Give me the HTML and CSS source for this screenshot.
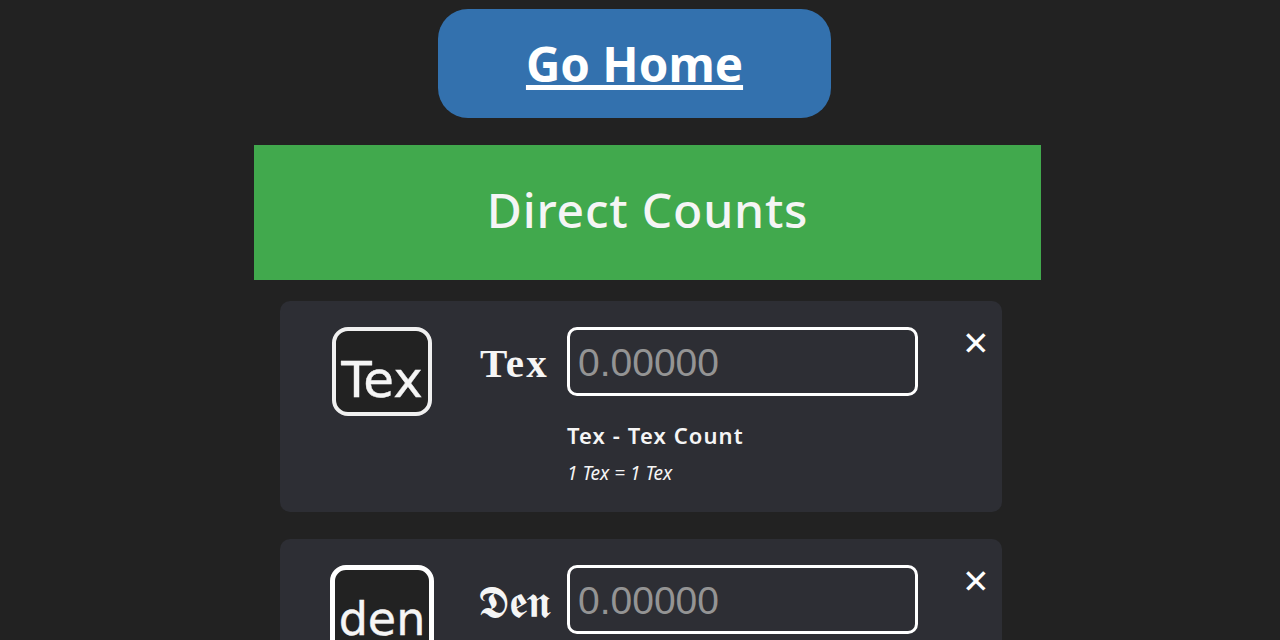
FILE: index.html
```html
<!DOCTYPE html>
<html lang="en">
<head>
    <meta charset="UTF-8">
    <meta name="viewport" content="width=device-width, initial-scale=1.0">
    <title>Direct Counts</title>
    <link rel="stylesheet" href="styles.css">
</head>
<body>
    <div class="home-row">
        <a class="home-btn" href="#">Go Home</a>
    </div>

    <div class="container">
        <h1 class="section-title">Direct Counts</h1>

        <div class="card">
            <div class="icon-col">
                <div class="unit-icon"><span>Tex</span></div>
            </div>
            <div class="symbol symbol-tex">Tex</div>
            <div class="field-col">
                <input type="text" class="count-input" placeholder="0.00000">
                <p class="unit-name">Tex - Tex Count</p>
                <p class="unit-rate">1 Tex = 1 Tex</p>
            </div>
            <div class="close-btn">&#10005;</div>
        </div>

        <div class="card">
            <div class="icon-col">
                <div class="unit-icon unit-icon-big"><span>den</span></div>
            </div>
            <div class="symbol symbol-den">𝕯𝖊𝖓</div>
            <div class="field-col">
                <input type="text" class="count-input" placeholder="0.00000">
            </div>
            <div class="close-btn">&#10005;</div>
        </div>
    </div>
</body>
</html>
```

FILE: styles.css
```css
html, body {
    height: 640px;
    overflow: hidden;
}

body {
    font-family: "Noto Sans", sans-serif;
    background-color: #222222;
    color: #f5f5f5;
    margin: 0;
    padding: 0;
}

.home-row {
    width: 1269px;
    padding-top: 9px;
    display: flex;
    justify-content: center;
}

.home-btn {
    width: 393px;
    height: 109px;
    background-color: #3371ae;
    border-radius: 30px;
    color: white;
    font-family: "Noto Sans", sans-serif;
    font-size: 47.5px;
    font-weight: bold;
    line-height: 110px;
    text-align: center;
    text-decoration-thickness: 5px;
    text-underline-offset: 3px;
}

.container {
    width: 787px;
    margin-top: 27px;
    margin-left: 254px;
}

.section-title {
    height: 135px;
    margin: 0;
    background-color: #41a94d;
    font-size: 48px;
    font-weight: 500;
    letter-spacing: 0.8px;
    line-height: 130px;
    text-align: center;
}

.card {
    width: 722px;
    height: 211px;
    box-sizing: border-box;
    margin: 21px 0 27px 26px;
    padding: 26px 0 0;
    background-color: #2d2e34;
    border-radius: 10px;
    display: flex;
    align-items: flex-start;
}

.card + .card {
    margin-top: 0;
}

.icon-col {
    width: 195px;
    padding-left: 9px;
    box-sizing: border-box;
    display: flex;
    justify-content: center;
}

.unit-icon {
    width: 100px;
    height: 89px;
    box-sizing: border-box;
    border: 4px solid #f0f0f0;
    border-radius: 16px;
    background-color: #222222;
    font-family: "DejaVu Sans", sans-serif;
    font-size: 50px;
    line-height: 98px;
    text-align: center;
    -webkit-text-stroke: 0.4px #f5f5f5;
    overflow: hidden;
}

.unit-icon-big {
    width: 104px;
    height: 110px;
    border: 5px solid white;
    font-size: 46px;
    line-height: 98px;
}

.symbol {
    width: 92px;
    box-sizing: border-box;
    padding-right: 13px;
    line-height: 72px;
    text-align: center;
    white-space: nowrap;
}

.symbol-tex {
    font-family: "Liberation Serif", serif;
    font-size: 41px;
    font-weight: bold;
    letter-spacing: 2.3px;
}

.symbol-den {
    font-family: "DejaVu Serif", serif;
    font-size: 46px;
    line-height: 74px;
}

.field-col {
    width: 351px;
}

.count-input {
    display: block;
    width: 351px;
    height: 69px;
    box-sizing: border-box;
    padding: 3px 8px 0;
    background-color: #2d2e34;
    border: 3px solid white;
    border-radius: 10px;
    color: #f5f5f5;
    font-family: "Liberation Sans", sans-serif;
    font-size: 39px;
}

.count-input::placeholder {
    color: #949494;
}

.unit-name {
    margin: 25px 0 0;
    font-size: 22px;
    font-weight: 600;
    letter-spacing: 1.1px;
    line-height: 28px;
}

.unit-rate {
    margin: 12px 0 0;
    font-size: 19px;
    font-style: italic;
    line-height: 24px;
}

.close-btn {
    margin-left: 44px;
    font-family: "DejaVu Sans", sans-serif;
    font-size: 33px;
    line-height: 34px;
    color: white;
}
```
